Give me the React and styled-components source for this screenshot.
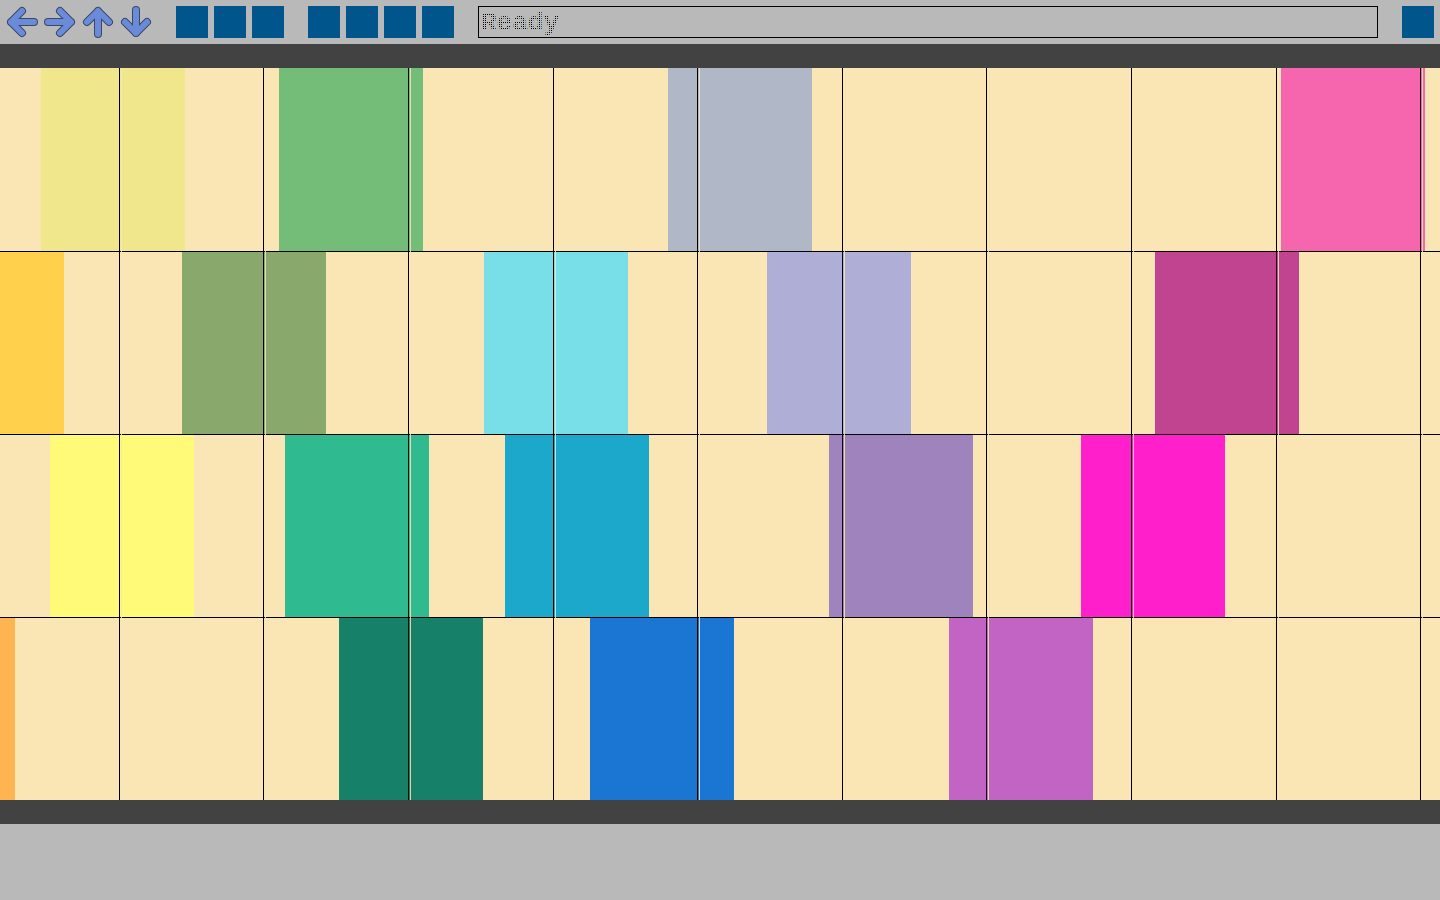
import React from 'react'
import styled, { createGlobalStyle } from 'styled-components';

const GlobalStyle = createGlobalStyle`
	html, body {
		margin: 0;
		padding: 0;
		background: #b9b9b9;
		font-family: "Liberation Sans", Arial, sans-serif;
	}
	* { box-sizing: border-box; }
`;

// clips per track: [left, width, colour]
const tracks = [
	[[41, 144, '#f0e68c'], [279, 144, '#73bd78'], [668, 144, '#b0b8c8'], [1281, 144, '#f666ae']],
	[[-80, 144, '#ffd04b'], [182, 144, '#88a96b'], [484, 144, '#78dee8'], [767, 144, '#aeaed7'], [1155, 144, '#c0448f']],
	[[50, 144, '#fffb78'], [285, 144, '#2fba8f'], [505, 144, '#1ca8cb'], [829, 144, '#9e83bc'], [1081, 144, '#ff20cc']],
	[[-129, 144, '#ffb452'], [339, 144, '#168069'], [590, 144, '#1b75d3'], [949, 144, '#c164c3']],
];

// beat markers (px from the left of the timeline)
const beats = [119, 263, 408, 553, 697, 842, 986, 1131, 1276, 1420];

const ARROW = 'M4 16 H27 M16 5 L27 16 L16 27';

const Page = styled.div`
	width: 1440px;
	height: 900px;
	display: flex;
	flex-direction: column;
	background: #b9b9b9;
	overflow: hidden;
`;

const Toolbar = styled.div`
	height: 44px;
	flex: none;
	display: flex;
	align-items: center;
	padding: 0 6px 0 3px;
	gap: 24px;
	background: #b9b9b9;
`;

const ArrowGroup = styled.div`
	display: flex;
	margin-right: -3px;
`;

const ArrowButton = styled.div`
	width: 38px;
	height: 32px;
	display: flex;
	align-items: center;
	justify-content: center;
`;

const ArrowIcon = styled.svg`
	display: block;
	width: 32px;
	height: 32px;
	transform: rotate(${p => p.$rotate}deg);
`;

const ButtonGroup = styled.div`
	display: flex;
	gap: 6px;
`;

const Square = styled.div`
	width: 32px;
	height: 32px;
	flex: none;
	background: #00558c;
`;

const Status = styled.div`
	flex: 1;
	height: 32px;
	border: 1px solid #000;
	display: flex;
	align-items: center;
	padding-left: 2px;
	overflow: hidden;
`;

/* dot-matrix look: solid text with a grey sieve laid over it,
   leaving one pixel in every 2x2 cell visible */
const StatusText = styled.span`
	position: relative;
	font-family: "Liberation Mono", "DejaVu Sans Mono", monospace;
	font-size: 26px;
	font-weight: bold;
	line-height: 30px;
	margin-top: 1px;
	color: #000;
	&::after {
		content: '';
		position: absolute;
		inset: 0;
		background-image:
			linear-gradient(90deg, transparent 1px, #b9b9b9 1px),
			linear-gradient(180deg, transparent 1px, #b9b9b9 1px);
		background-size: 2px 2px;
	}
`;

const Band = styled.div`
	height: 24px;
	flex: none;
	background: #424242;
`;

const Timeline = styled.div`
	position: relative;
	height: 732px;
	flex: none;
	display: flex;
	flex-direction: column;
	background: #fae5b5;
	overflow: hidden;
`;

const Track = styled.div`
	position: relative;
	height: 183px;
	flex: none;
	& + & {
		border-top: 1px solid #000;
	}
`;

const Clip = styled.div`
	position: absolute;
	top: 0;
	bottom: 0;
	left: ${p => p.$left}px;
	width: ${p => p.$width}px;
	background: ${p => p.$color};
`;

const Beats = styled.div`
	position: absolute;
	inset: 0;
	pointer-events: none;
`;

const BeatLine = styled.div`
	position: absolute;
	top: 0;
	bottom: 0;
	left: ${p => p.$left}px;
	width: 1px;
	background: #000;
	&::after {
		content: '';
		position: absolute;
		top: 0;
		bottom: 0;
		left: 2px;
		width: 1px;
		background: rgba(250, 229, 181, 0.85);
	}
`;

const Footer = styled.div`
	flex: 1;
	background: #b9b9b9;
`;

const Arrow = ({ rotate }) => (
	<ArrowIcon viewBox="0 0 32 32" $rotate={rotate}>
		<g fill="none" strokeLinecap="round" strokeLinejoin="round">
			<path d={ARROW} stroke="#3a4766" strokeWidth="8" />
			<path d={ARROW} stroke="#6a8bd9" strokeWidth="6" />
		</g>
	</ArrowIcon>
);

const App = () => {
	return (
		<Page>
			<GlobalStyle />
			<Toolbar>
				<ArrowGroup>
					<ArrowButton><Arrow rotate={180} /></ArrowButton>
					<ArrowButton><Arrow rotate={0} /></ArrowButton>
					<ArrowButton><Arrow rotate={-90} /></ArrowButton>
					<ArrowButton><Arrow rotate={90} /></ArrowButton>
				</ArrowGroup>
				<ButtonGroup>
					<Square /><Square /><Square />
				</ButtonGroup>
				<ButtonGroup>
					<Square /><Square /><Square /><Square />
				</ButtonGroup>
				<Status>
					<StatusText>Ready</StatusText>
				</Status>
				<Square />
			</Toolbar>

			<Band />

			<Timeline>
				{tracks.map((clips, t) => (
					<Track key={t}>
						{clips.map(([left, width, color], i) => (
							<Clip key={i} $color={color} $left={left} $width={width} />
						))}
					</Track>
				))}
				<Beats>
					{beats.map(x => (
						<BeatLine key={x} $left={x} />
					))}
				</Beats>
			</Timeline>

			<Band />
			<Footer />
		</Page>
	)
}

export default App;
